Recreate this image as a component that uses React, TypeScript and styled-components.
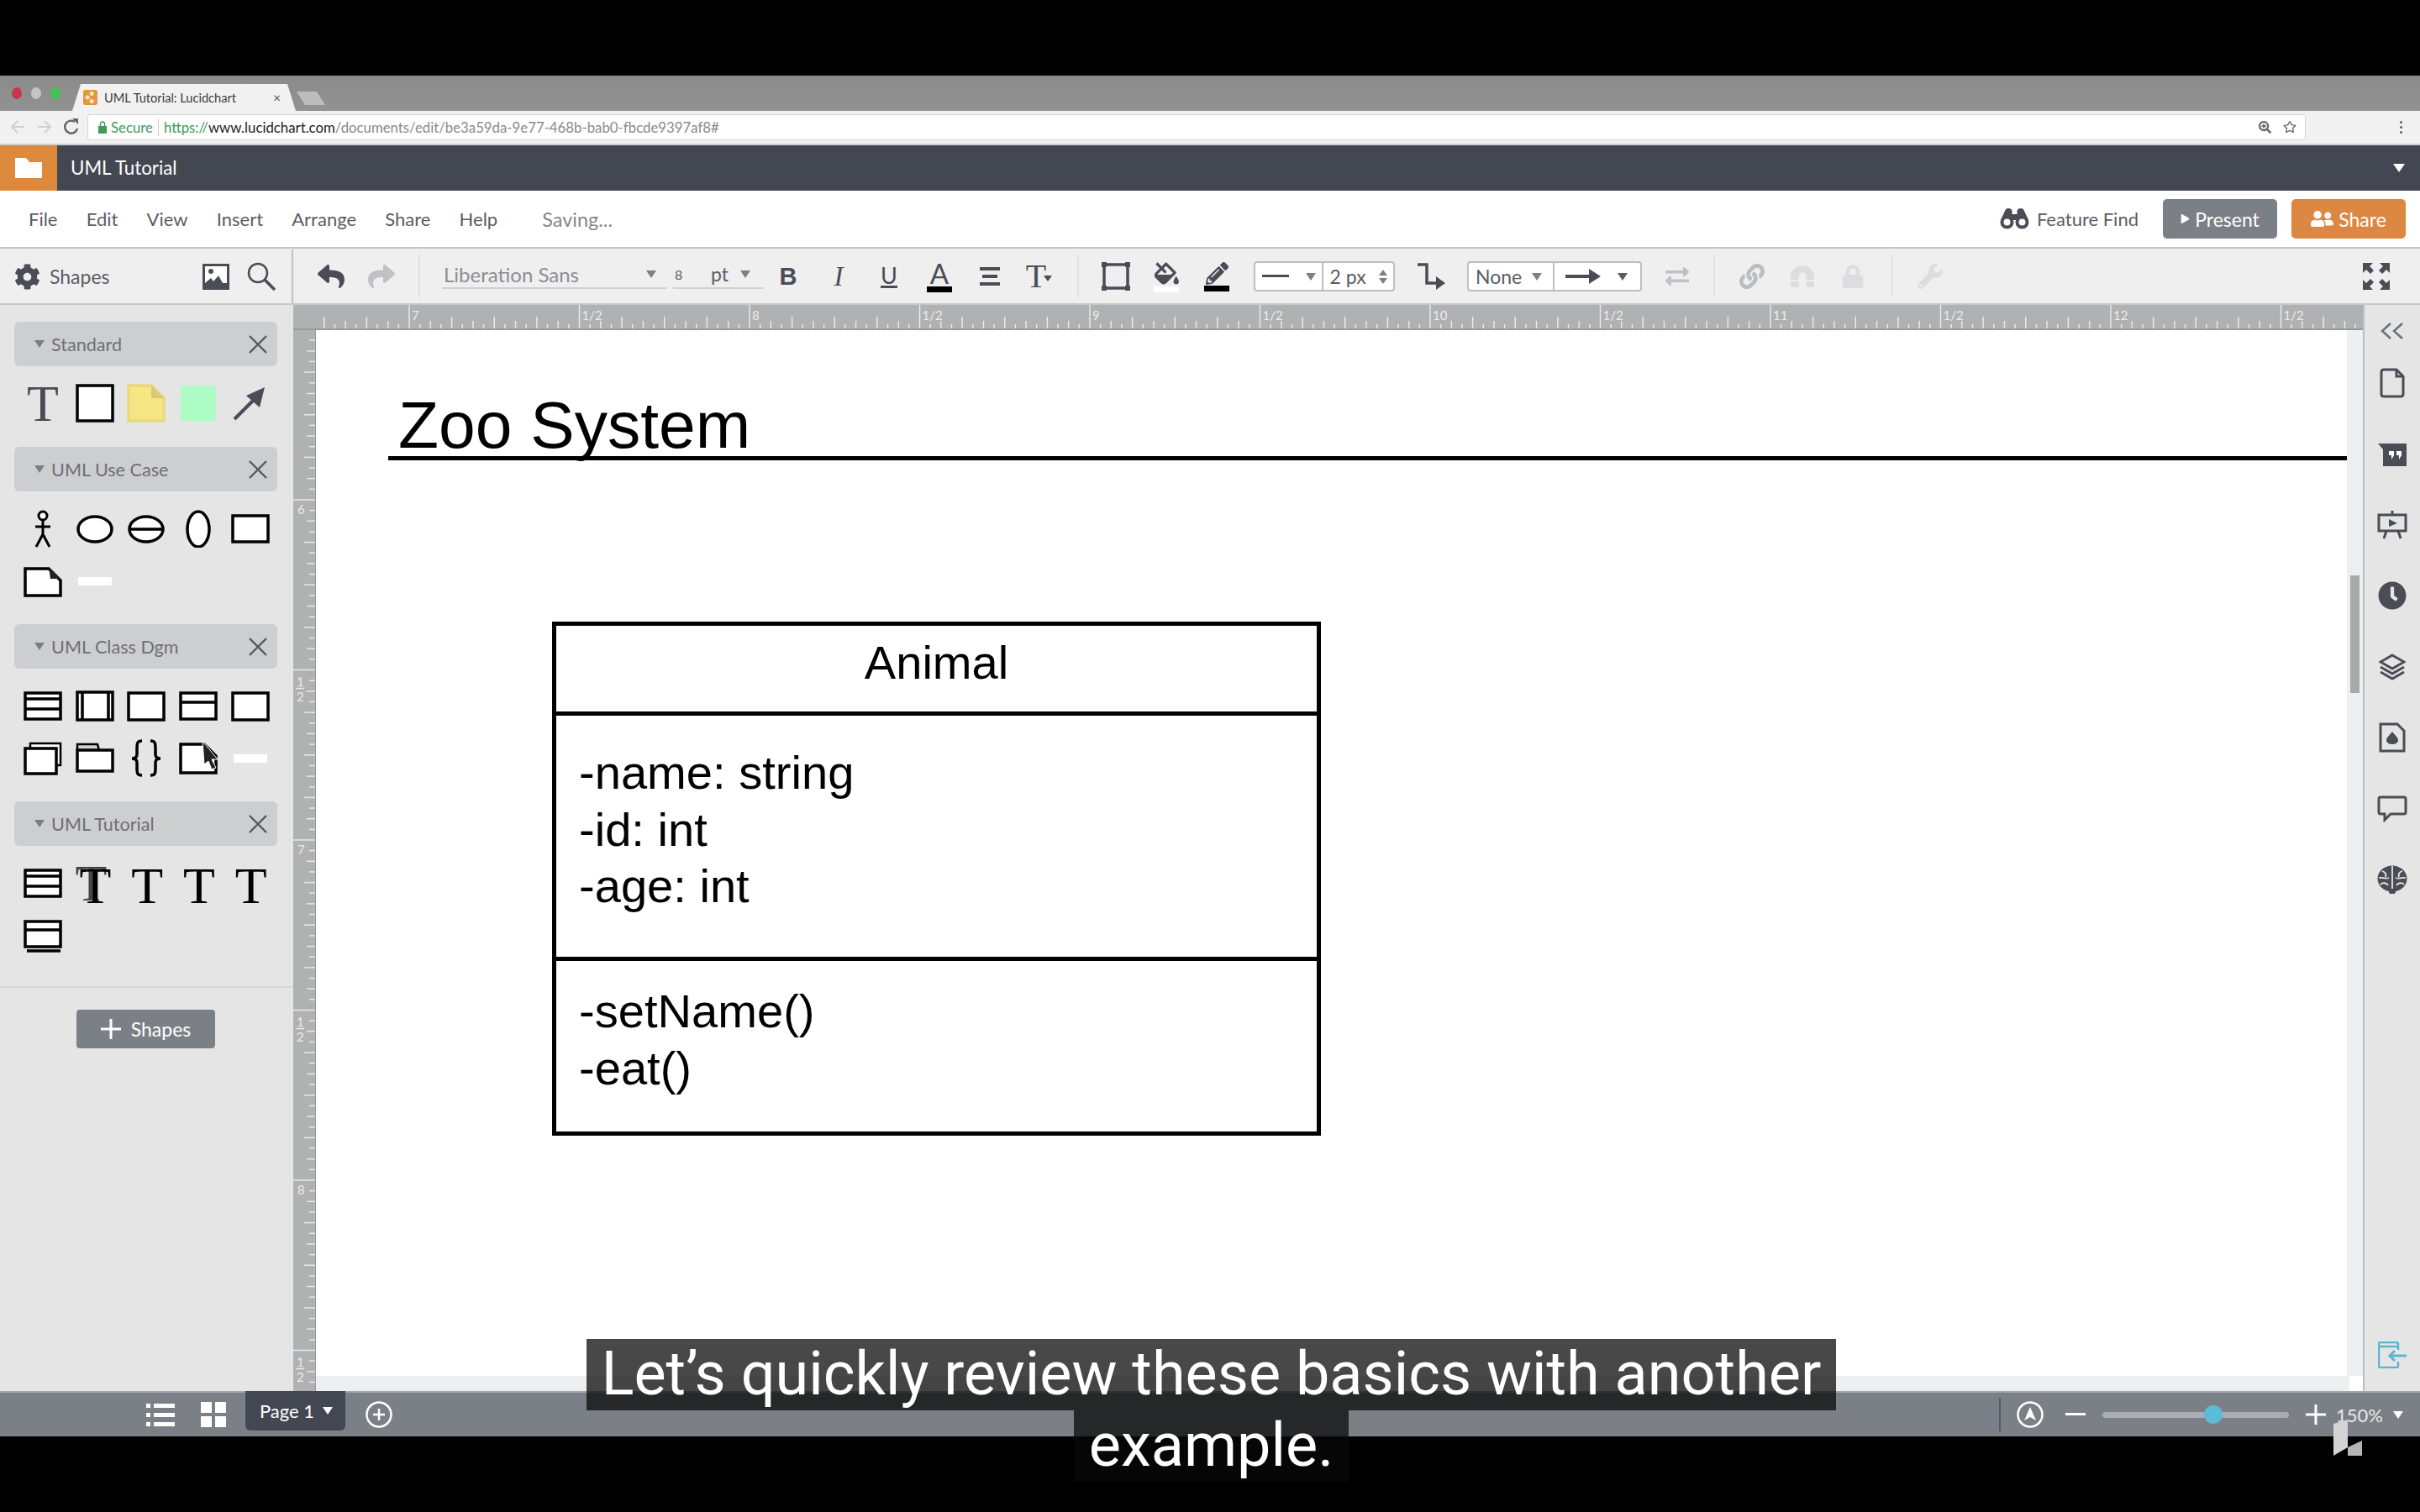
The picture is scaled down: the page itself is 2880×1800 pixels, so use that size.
import React from 'react'
import styled, { createGlobalStyle } from 'styled-components'
import {
  FaClock,
  FaCog,
  FaExchangeAlt,
  FaFillDrip,
  FaLink,
  FaLock,
  FaMagnet,
  FaPencilAlt,
  FaPlay,
  FaRegStar,
  FaReply,
  FaSearchPlus,
  FaShare,
  FaUserFriends,
  FaWrench
} from 'react-icons/fa'

const UI_FONT = `Lato, 'Noto Sans', sans-serif`
const DOC_FONT = `'Liberation Sans', Arial, sans-serif`
const SERIF_FONT = `'Liberation Serif', serif`
const ICON = '#4a4d55'

const GlobalStyle = createGlobalStyle`
  html, body {
    margin: 0;
    padding: 0;
    background: #000;
  }
  * {
    box-sizing: border-box;
  }
`

const STYLED_ROOT = styled.div`
  position: relative;
  display: flex;
  flex-direction: column;
  width: 2880px;
  height: 1800px;
  overflow: hidden;
  background: #000;
  font-family: ${UI_FONT};
`

const STYLED_LETTERBOX = styled.div`
  flex: 0 0 90px;
  background: #000;
`

const STYLED_SPACE = styled.span<{ $left?: number; $width?: number }>`
  display: flex;
  flex: none;
  width: ${({ $width }) => ($width ? `${$width}px` : 'auto')};
  margin-left: ${({ $left }) => $left ?? 0}px;
`

/* browser chrome */
const STYLED_TAB_STRIP = styled.div`
  flex: 0 0 42px;
  display: flex;
  align-items: flex-end;
  background: linear-gradient(#8b8b8b, #929292);
`

const STYLED_LIGHTS = styled.div`
  display: flex;
  align-items: center;
  align-self: flex-start;
  gap: 11px;
  height: 42px;
  padding: 0 14px;
`

const STYLED_LIGHT = styled.span<{ $color: string }>`
  width: 12px;
  height: 14px;
  border-radius: 50%;
  background: ${({ $color }) => $color};
`

const STYLED_TAB = styled.div`
  display: flex;
  align-items: center;
  width: 266px;
  height: 32px;
  padding: 0 18px 0 13px;
  background: #f1f1f1;
  clip-path: polygon(0 100%, 10px 0, 256px 0, 100% 100%);
  font-size: 14.6px;
  color: #3c3c3c;
`

const STYLED_FAVICON = styled.span`
  flex: 0 0 17px;
  height: 18px;
  border-radius: 2px;
  background: radial-gradient(circle at 60% 25%, #f7e2ba 0 2px, transparent 3px),
    radial-gradient(circle at 60% 75%, #f7e2ba 0 2px, transparent 3px),
    radial-gradient(circle at 30% 50%, #f7e2ba 0 2px, transparent 3px), #e3983f;
`

const STYLED_TAB_TITLE = styled.span`
  flex: 1;
  margin-left: 8px;
  white-space: nowrap;
`

const STYLED_TAB_X = styled.span`
  font-size: 15px;
  color: #555;
`

const STYLED_GHOST_TAB = styled.div`
  width: 34px;
  height: 16px;
  margin: 0 0 7px 1px;
  background: #bdbdbd;
  clip-path: polygon(0 0, 24px 0, 100% 100%, 10px 100%);
`

const STYLED_URL_ROW = styled.div`
  flex: 0 0 41px;
  display: flex;
  align-items: center;
  padding-bottom: 1px;
  background: #f1f1f1;
  border-bottom: 2px solid #cfcfcf;
`

const STYLED_NAV = styled.div`
  display: flex;
  align-items: center;
  width: 104px;
  padding-left: 12px;
  gap: 14px;
`

const STYLED_ADDRESS = styled.div`
  display: flex;
  align-items: center;
  width: 2640px;
  height: 31px;
  padding: 0 10px 0 12px;
  background: #fff;
  border: 1px solid #d4d4d4;
  border-radius: 3px;
  font-size: 16.8px;
  white-space: nowrap;
`

const STYLED_SECURE = styled.span`
  margin-left: 5px;
  padding-right: 6px;
  border-right: 1px solid #d0d0d0;
  color: #3f9b58;
`

const STYLED_URL_PART = styled.span<{ $color: string }>`
  color: ${({ $color }) => $color};
`

const STYLED_ADDRESS_ICONS = styled.div`
  display: flex;
  align-items: center;
  gap: 14px;
  margin-left: auto;
  color: #666;
`

const STYLED_KEBAB = styled.div`
  margin-left: 112px;
  display: flex;
  flex-direction: column;
  gap: 3px;
  span {
    width: 3px;
    height: 3px;
    background: #5c5c5c;
    border-radius: 50%;
  }
`

/* lucidchart header */
const STYLED_TITLE_BAR = styled.div`
  flex: 0 0 54px;
  display: flex;
  align-items: center;
  background: #434751;
  color: #fff;
`

const STYLED_FOLDER_BOX = styled.div`
  display: flex;
  align-items: center;
  justify-content: center;
  width: 68px;
  height: 100%;
  background: #dd8a3c;
`

const STYLED_DOC_TITLE = styled.div`
  margin: -2px 0 0 16px;
  font-size: 22.3px;
  font-weight: 400;
`

const STYLED_CARET = styled.span<{ $size?: number; $color?: string }>`
  display: inline-block;
  flex: none;
  width: 0;
  height: 0;
  border-left: ${({ $size }) => $size ?? 6}px solid transparent;
  border-right: ${({ $size }) => $size ?? 6}px solid transparent;
  border-top: ${({ $size }) => ($size ?? 6) * 1.5}px solid ${({ $color }) => $color ?? '#7d7f84'};
`

const STYLED_TITLE_CARET = styled.div`
  margin-left: auto;
  margin-right: 18px;
  display: flex;
`

const STYLED_MENU_BAR = styled.div`
  flex: 0 0 69px;
  display: flex;
  align-items: center;
  padding: 0 17px 0 34px;
  background: #fff;
  border-bottom: 2px solid #c4c5c7;
  font-size: 22px;
  color: #5a5d64;
`

const STYLED_MENU_ITEMS = styled.div`
  display: flex;
  gap: 34.2px;
`

const STYLED_SAVING = styled.span`
  margin-left: 53px;
  font-size: 23.5px;
  color: #85878c;
`

const STYLED_FEATURE = styled.div`
  display: flex;
  align-items: center;
  gap: 9px;
  margin: 0 29px 0 auto;
  color: #5a5d64;
`

const STYLED_ACTION = styled.div<{ $bg: string; $gap?: number }>`
  display: flex;
  align-items: center;
  justify-content: center;
  gap: 6px;
  width: 136px;
  height: 47px;
  margin-left: ${({ $gap }) => $gap ?? 0}px;
  border-radius: 5px;
  background: ${({ $bg }) => $bg};
  font-size: 23px;
  color: #fff;
`

/* toolbar */
const STYLED_TOOLBAR = styled.div`
  flex: 0 0 67px;
  display: flex;
  align-items: center;
  padding-top: 1px;
  background: #efeff0;
  border-bottom: 2px solid #c6c7c9;
`

const STYLED_TOOL_SHAPES = styled.div`
  display: flex;
  align-items: center;
  width: 349px;
  height: 100%;
  padding: 0 19px 0 17px;
  border-right: 2px solid #bfc0c2;
  font-size: 23px;
  color: #5a5d64;
  svg {
    color: ${ICON};
  }
`

const STYLED_TOOL_LABEL = styled.span`
  margin-left: 11px;
  flex: 1;
`

const STYLED_TOOL_STRIP = styled.div`
  flex: 1;
  display: flex;
  align-items: center;
  height: 100%;
  padding-left: 15px;
`

const STYLED_TOOL = styled.div<{ $fade?: number; $gap?: number }>`
  position: relative;
  display: flex;
  flex: 0 0 60px;
  flex-direction: column;
  align-items: center;
  justify-content: center;
  height: 100%;
  margin-left: ${({ $gap }) => $gap ?? 0}px;
  color: ${ICON};
  font-size: 27px;
  opacity: ${({ $fade }) => $fade ?? 1};
`

const STYLED_TOOL_SEP = styled.div<{ $left: number; $right?: number }>`
  flex: 0 0 2px;
  height: 50px;
  margin: 0 ${({ $right }) => $right ?? 14}px 0 ${({ $left }) => $left}px;
  background: #e0e0e1;
`

const STYLED_SELECT = styled.div<{ $width: number; $gap?: number }>`
  display: flex;
  align-items: center;
  width: ${({ $width }) => $width}px;
  height: 34px;
  margin-left: ${({ $gap }) => $gap ?? 0}px;
  border-bottom: 2px solid #cfd0d2;
  font-size: 23px;
  color: #8c8e93;
  transform: translateY(-2px);
`

const STYLED_SELECT_TEXT = styled.span<{ $small?: boolean }>`
  flex: 1;
  padding-left: 2px;
  font-size: ${({ $small }) => ($small ? 16 : 24)}px;
  color: ${({ $small }) => ($small ? '#5a5d64' : '#8c8e93')};
`

const STYLED_PT = styled.span`
  margin: 0 14px 0 24px;
  font-size: 23px;
  color: #5a5d64;
`

const STYLED_BOX_GROUP = styled.div<{ $width: number; $gap: number }>`
  display: flex;
  align-items: center;
  width: ${({ $width }) => $width}px;
  height: 36px;
  margin-left: ${({ $gap }) => $gap}px;
  background: #fff;
  border: 2px solid #bdbec1;
  border-radius: 4px;
  font-size: 23px;
  color: #5a5d64;
`

const STYLED_BOX_PART = styled.div<{ $width: number; $last?: boolean; $left?: number; $right?: number }>`
  display: flex;
  align-items: center;
  justify-content: space-between;
  width: ${({ $width }) => $width}px;
  height: 100%;
  padding: 0 ${({ $right }) => $right ?? 7}px 0 ${({ $left }) => $left ?? 8}px;
  border-right: ${({ $last }) => ($last ? 'none' : '2px solid #bdbec1')};
`

const STYLED_SPIN = styled.div`
  display: flex;
  flex-direction: column;
  gap: 3px;
  span:first-child {
    transform: rotate(180deg);
  }
`

const STYLED_BOLD = styled.span`
  font-family: ${DOC_FONT};
  font-weight: 700;
  font-size: 29px;
`

const STYLED_ITALIC = styled.span`
  font-family: ${SERIF_FONT};
  font-style: italic;
  font-size: 33px;
`

const STYLED_UNDER = styled.span`
  font-family: ${UI_FONT};
  font-size: 27px;
  line-height: 25px;
  border-bottom: 3px solid ${ICON};
`

const STYLED_COLOR_A = styled.span`
  font-family: ${UI_FONT};
  font-size: 33px;
  line-height: 30px;
`

const STYLED_SWATCH = styled.span<{ $color: string }>`
  display: block;
  width: 30px;
  height: 7px;
  margin-top: 1px;
  background: ${({ $color }) => $color};
`

const STYLED_TOOL_T = styled.span`
  margin-left: -10px;
  font-family: ${SERIF_FONT};
  font-size: 40px;
  line-height: 1;
`

const STYLED_T_CARET = styled.span`
  position: absolute;
  left: 34px;
  top: 31px;
  display: flex;
`

const STYLED_MAGNET = styled(FaMagnet)`
  transform: rotate(180deg);
`

const STYLED_FULLSCREEN = styled.div`
  margin: 0 22px 0 auto;
  width: 60px;
  display: flex;
  justify-content: center;
`

/* workspace */
const STYLED_WORKSPACE = styled.div`
  flex: 1;
  display: flex;
  min-height: 0;
`

const STYLED_SIDEBAR = styled.div`
  flex: 0 0 349px;
  padding-top: 20px;
  background: #e5e5e6;
`

const STYLED_SHAPE_HEAD = styled.div`
  display: flex;
  align-items: center;
  width: 313px;
  height: 53px;
  margin-left: 17px;
  padding: 0 12px 0 24px;
  border-radius: 6px;
  background: #cdced0;
  font-size: 21.6px;
  color: #6d7076;
`

const STYLED_HEAD_LABEL = styled.span`
  margin-left: 8px;
  flex: 1;
`

const STYLED_SHAPE_GRID = styled.div`
  display: grid;
  grid-template-columns: repeat(5, 61.7px);
  grid-auto-rows: 62px;
  padding: 13px 0 21px 20px;
`

const STYLED_CELL = styled.div`
  display: flex;
  align-items: center;
  justify-content: center;
`

const STYLED_SHAPE_SVG = styled.svg`
  width: 46px;
  height: 46px;
  fill: #fff;
  stroke: #000;
  stroke-width: 3.5;
`

const STYLED_GLYPH_CELL = styled.span<{ $dark?: boolean }>`
  margin: ${({ $dark }) => ($dark ? '5px 0 0 2px' : '0')};
  font-family: ${SERIF_FONT};
  font-size: 62px;
  line-height: 1;
  color: ${({ $dark }) => ($dark ? '#000' : ICON)};
`

const STYLED_DOUBLE_T = styled.span`
  margin: 5px 0 0 2px;
  font-family: ${SERIF_FONT};
  font-size: 62px;
  line-height: 1;
  color: #000;
  text-shadow: -5px -3px 0 #444;
`

const STYLED_SIDE_FOOT = styled.div`
  margin-top: 9px;
  padding-top: 26px;
  border-top: 2px solid #d6d7d8;
  display: flex;
  justify-content: center;
`

const STYLED_ADD_SHAPES = styled.div`
  display: flex;
  align-items: center;
  justify-content: center;
  gap: 12px;
  width: 165px;
  height: 46px;
  margin-left: -2px;
  border-radius: 4px;
  background: #7b8087;
  font-size: 23px;
  color: #fff;
`

const STYLED_MAIN = styled.div`
  flex: 1;
  display: flex;
  flex-direction: column;
  min-width: 0;
`

const STYLED_RULER_SVG = styled.svg`
  display: block;
  flex: none;
  background: #b0b1b3;
  font-family: ${UI_FONT};
  font-size: 15px;
`

const STYLED_CANVAS_ROW = styled.div`
  flex: 1;
  display: flex;
  min-height: 0;
`

const STYLED_CANVAS_COL = styled.div`
  flex: 1;
  display: flex;
  flex-direction: column;
  min-width: 0;
`

const STYLED_PAGE = styled.div`
  position: relative;
  flex: 1;
  display: flex;
  min-height: 0;
  background: #fff;
  font-family: ${DOC_FONT};
  color: #000;
`

const STYLED_PAGE_AREA = styled.div`
  position: relative;
  flex: 1;
`

const STYLED_SCROLL_TRACK = styled.div`
  position: relative;
  flex: 0 0 19px;
  background: #eeeff0;
`

const STYLED_SCROLL_THUMB = styled.div`
  position: absolute;
  top: 292px;
  left: 4px;
  width: 11px;
  height: 140px;
  background: #a9a9a9;
`

const STYLED_HSCROLL = styled.div`
  flex: 0 0 18px;
  display: flex;
  justify-content: flex-end;
  background: #eeeff0;
`

const STYLED_CORNER = styled.div`
  width: 16px;
  background: #fff;
`

const STYLED_DOC_TITLE_TEXT = styled.div`
  position: absolute;
  left: 98px;
  top: 74px;
  font-size: 78.6px;
  line-height: 1;
  white-space: nowrap;
`

const STYLED_DOC_RULE = styled.div`
  position: absolute;
  left: 86px;
  right: 0;
  top: 150px;
  height: 5px;
  background: #000;
`

const STYLED_CLASS_BOX = styled.div`
  position: absolute;
  left: 281px;
  top: 347px;
  display: flex;
  flex-direction: column;
  width: 915px;
  height: 612px;
  border: 5px solid #000;
  font-size: 56.1px;
  line-height: 67.5px;
`

const STYLED_CLASS_NAME = styled.div`
  flex: 0 0 107px;
  padding-top: 10px;
  text-align: center;
  border-bottom: 5px solid #000;
`

const STYLED_CLASS_ATTRS = styled.div`
  flex: 0 0 292px;
  padding: 34px 0 0 27px;
  border-bottom: 5px solid #000;
`

const STYLED_CLASS_METHODS = styled.div`
  flex: 1;
  padding: 26px 0 0 27px;
`

const STYLED_RAIL = styled.div`
  flex: 0 0 68px;
  display: flex;
  flex-direction: column;
  align-items: center;
  padding: 10px 0 27px;
  background: #e5e5e6;
  border-left: 2px solid #bcbdbf;
  color: ${ICON};
`

const STYLED_RAIL_CELL = styled.div<{ $height?: number }>`
  display: flex;
  align-items: center;
  justify-content: center;
  flex: 0 0 ${({ $height }) => $height ?? 84.4}px;
  font-size: 34px;
`

const STYLED_RAIL_EXIT = styled.div`
  margin-top: auto;
  display: flex;
`

/* status bar */
const STYLED_STATUS = styled.div`
  flex: 0 0 54px;
  display: flex;
  align-items: center;
  padding-left: 174px;
  background: #7b8087;
  border-top: 2px solid #a2a5a9;
  color: #fff;
`

const STYLED_PAGE_TAB = styled.div`
  display: flex;
  align-items: center;
  gap: 10px;
  align-self: flex-start;
  width: 119px;
  height: 47px;
  margin: -2px 24px 0 23px;
  padding-left: 17px;
  border-radius: 0 0 6px 6px;
  background: #434751;
  font-size: 22px;
`

const STYLED_STATUS_RIGHT = styled.div`
  display: flex;
  align-items: center;
  margin-left: auto;
  padding-right: 20px;
  font-size: 22px;
  color: #e8e9ea;
`

const STYLED_STATUS_SEP = styled.div`
  width: 2px;
  height: 40px;
  margin-right: 19px;
  background: #565a62;
`

const STYLED_SLIDER = styled.div`
  position: relative;
  width: 222px;
  height: 7px;
  margin: 0 20px;
  border-radius: 4px;
  background: #a9adb3;
`

const STYLED_SLIDER_KNOB = styled.div`
  position: absolute;
  top: -8px;
  width: 22px;
  height: 22px;
  border-radius: 50%;
  background: #5bbcd6;
`

const STYLED_ZOOM_VALUE = styled.span`
  margin: 0 12px;
`

/* overlays */
const STYLED_CAPTIONS = styled.div`
  position: absolute;
  left: 3px;
  right: 0;
  top: 1594px;
  display: flex;
  flex-direction: column;
  align-items: center;
`

const STYLED_CAPTION = styled.div`
  height: 85px;
  padding: 0 18px;
  background: rgba(8, 8, 8, 0.74);
  color: #fff;
  font-family: Roboto, sans-serif;
  font-size: 72px;
  line-height: 84px;
  white-space: nowrap;
`

const STYLED_WATERMARK = styled.svg`
  position: absolute;
  left: 2777px;
  top: 1690px;
  width: 34px;
  height: 44px;
`

type ShapeKind =
  | 'rect' | 'note' | 'green' | 'arrow' | 'actor' | 'ellipse' | 'split' | 'tall' | 'wide' | 'fold' | 'dash'
  | 'classThree' | 'classSides' | 'classHead' | 'plain' | 'stack' | 'folder' | 'braces' | 'foldCursor' | 'classFoot'

const drawings: Record<ShapeKind, React.ReactNode> = {
  rect: <rect x="2" y="2" width="42" height="42" />,
  note: (
    <>
      <path d="M2 2H29L44 17V44H2Z" fill="#f6e784" stroke="#ead87e" />
      <path d="M29 2V17H44Z" fill="#d8c878" stroke="none" />
    </>
  ),
  green: <rect x="2" y="2" width="42" height="42" fill="#adfcc3" stroke="none" />,
  arrow: (
    <>
      <line x1="4" y1="42" x2="30" y2="16" stroke={ICON} strokeWidth="4" />
      <polygon points="40,4 34,28 18,14" fill={ICON} stroke="none" />
    </>
  ),
  actor: (
    <g strokeWidth="3">
      <circle cx="23" cy="8" r="5" />
      <path d="M23 13V31M14 21H32M23 30L15 45M23 30L31 45" fill="none" />
    </g>
  ),
  ellipse: <ellipse cx="23" cy="24" rx="20" ry="15" />,
  split: (
    <>
      <ellipse cx="23" cy="24" rx="20" ry="15" />
      <line x1="3" y1="24" x2="43" y2="24" />
    </>
  ),
  tall: <ellipse cx="23" cy="24" rx="13" ry="21" />,
  wide: <rect x="2" y="8" width="42" height="31" />,
  fold: (
    <>
      <path d="M2 9H30L44 23V41H2Z" />
      <path d="M30 7L32 21H44Z" fill="#222" stroke="none" />
    </>
  ),
  dash: <rect x="3" y="19" width="40" height="10" stroke="none" />,
  plain: <rect x="2" y="8" width="42" height="32" />,
  classThree: (
    <>
      <rect x="2" y="8" width="42" height="31" />
      <path d="M2 15H44M2 27H44" fill="none" />
    </>
  ),
  classSides: (
    <>
      <rect x="2" y="7" width="42" height="33" />
      <path d="M8 7V40M39 7V40" fill="none" />
    </>
  ),
  classHead: (
    <>
      <rect x="2" y="8" width="42" height="31" />
      <line x1="2" y1="19" x2="44" y2="19" />
    </>
  ),
  classFoot: (
    <>
      <rect x="2" y="7" width="42" height="30" />
      <line x1="2" y1="17" x2="44" y2="17" />
      <line x1="4" y1="42" x2="44" y2="42" />
    </>
  ),
  stack: (
    <>
      <rect x="8" y="6" width="36" height="26" strokeWidth="2.5" />
      <rect x="2" y="12" width="37" height="30" />
    </>
  ),
  folder: (
    <>
      <path d="M2 14V7H26L28 14" fill="#cfcfcf" strokeWidth="2.5" />
      <rect x="2" y="14" width="42" height="25" />
    </>
  ),
  braces: (
    <path
      d="M18 3C12 3 12 6 12 13V19C12 22 10 24 6 24C10 24 12 26 12 29V35C12 41 12 44 18 44M28 3C34 3 34 6 34 13V19C34 22 36 24 40 24C36 24 34 26 34 29V35C34 41 34 44 28 44"
      fill="none"
    />
  ),
  foldCursor: (
    <>
      <path d="M2 7H30L44 21V41H2Z" />
      <path d="M28 3L46 25L39 25L44 35L39 37L35 27L30 31Z" fill="#222" stroke="#fff" strokeWidth="1" />
    </>
  )
}

const Shape = ({ kind }: { kind: ShapeKind }) => (
  <STYLED_CELL>
    <STYLED_SHAPE_SVG viewBox="0 0 46 46">{drawings[kind]}</STYLED_SHAPE_SVG>
  </STYLED_CELL>
)

const SerifT = ({ dark }: { dark?: boolean }) => (
  <STYLED_CELL>
    <STYLED_GLYPH_CELL $dark={dark}>T</STYLED_GLYPH_CELL>
  </STYLED_CELL>
)

const CloseX = () => (
  <svg width="22" height="22" viewBox="0 0 22 22" stroke="#55585f" strokeWidth="2.4">
    <path d="M1 1L21 21M21 1L1 21" />
  </svg>
)

const Binoculars = () => (
  <svg width="35" height="25" viewBox="0 0 35 25" fill={ICON}>
    <circle cx="8.5" cy="16.5" r="6" fill="none" stroke={ICON} strokeWidth="4" />
    <circle cx="26.5" cy="16.5" r="6" fill="none" stroke={ICON} strokeWidth="4" />
    <path d="M1 14L6 3Q7 0 10 0Q14 0 14.5 3V12H3Z" />
    <path d="M34 14L29 3Q28 0 25 0Q21 0 20.5 3V12H32Z" />
    <rect x="13" y="7" width="9" height="7" />
  </svg>
)

const Brain = () => (
  <svg width="36" height="34" viewBox="0 0 36 34">
    <ellipse cx="18" cy="16" rx="17.5" ry="15.5" fill={ICON} />
    <rect x="14" y="28" width="8" height="6" rx="2" fill={ICON} />
    <path
      d="M18 1V28M6 7C10 8 11 11 10 14M2 15C6 14 9 17 14 15M4 23C7 20 11 21 13 24M30 7C26 8 25 11 26 14M34 15C30 14 27 17 22 15M32 23C29 20 25 21 23 24"
      fill="none"
      stroke="#e5e5e6"
      strokeWidth="1.8"
    />
  </svg>
)

const Layers = () => (
  <svg width="32" height="32" viewBox="0 0 32 32" fill="none" stroke={ICON} strokeWidth="3">
    <path d="M16 2L30 10L16 18L2 10Z" />
    <path d="M2 16L16 24L30 16" />
    <path d="M2 22L16 30L30 22" />
  </svg>
)

const ShapeSection = ({ title, children }: { title: string; children: React.ReactNode }) => (
  <>
    <STYLED_SHAPE_HEAD>
      <STYLED_CARET $size={6} $color="#7b7e84" />
      <STYLED_HEAD_LABEL>{title}</STYLED_HEAD_LABEL>
      <CloseX />
    </STYLED_SHAPE_HEAD>
    <STYLED_SHAPE_GRID>{children}</STYLED_SHAPE_GRID>
  </>
)

const Sidebar = () => (
  <STYLED_SIDEBAR>
    <ShapeSection title="Standard">
      <SerifT />
      <Shape kind="rect" />
      <Shape kind="note" />
      <Shape kind="green" />
      <Shape kind="arrow" />
    </ShapeSection>
    <ShapeSection title="UML Use Case">
      <Shape kind="actor" />
      <Shape kind="ellipse" />
      <Shape kind="split" />
      <Shape kind="tall" />
      <Shape kind="wide" />
      <Shape kind="fold" />
      <Shape kind="dash" />
    </ShapeSection>
    <ShapeSection title="UML Class Dgm">
      <Shape kind="classThree" />
      <Shape kind="classSides" />
      <Shape kind="plain" />
      <Shape kind="classHead" />
      <Shape kind="plain" />
      <Shape kind="stack" />
      <Shape kind="folder" />
      <Shape kind="braces" />
      <Shape kind="foldCursor" />
      <Shape kind="dash" />
    </ShapeSection>
    <ShapeSection title="UML Tutorial">
      <Shape kind="classThree" />
      <STYLED_CELL>
        <STYLED_DOUBLE_T>T</STYLED_DOUBLE_T>
      </STYLED_CELL>
      <SerifT dark />
      <SerifT dark />
      <SerifT dark />
      <Shape kind="classFoot" />
    </ShapeSection>
    <STYLED_SIDE_FOOT>
      <STYLED_ADD_SHAPES>
        <svg width="24" height="24" viewBox="0 0 24 24" stroke="#fff" strokeWidth="3">
          <path d="M12 0V24M0 12H24" />
        </svg>
        Shapes
      </STYLED_ADD_SHAPES>
    </STYLED_SIDE_FOOT>
  </STYLED_SIDEBAR>
)

const HALF_INCH = 202.5
const TICK = HALF_INCH / 16
const H_LABELS = ['7', '1/2', '8', '1/2', '9', '1/2', '10', '1/2', '11', '1/2', '12', '1/2']
const V_LABELS = ['6', '1/2', '7', '1/2', '8', '1/2']

const tickLength = (k: number) => {
  if (k % 16 === 0) return 28
  if (k % 4 === 0) return 14
  if (k % 2 === 0) return 9
  return 5
}

const HRuler = () => {
  const origin = 138
  const ticks = []
  for (let k = -8; origin + k * TICK < 2463; k++) ticks.push(k)
  return (
    <STYLED_RULER_SVG width="2463" height="30">
      {ticks.map((k) => {
        const x = origin + k * TICK
        return <line key={k} x1={x} x2={x} y1={28} y2={28 - tickLength(k)} stroke="#e9e9ea" strokeWidth="1.5" />
      })}
      {H_LABELS.map((label, i) => (
        <text key={i} x={origin + i * HALF_INCH + 3} y="18" fill="#ececed" stroke="none">
          {label}
        </text>
      ))}
      <line x1="0" x2="2463" y1="29" y2="29" stroke="#98999b" strokeWidth="2" />
    </STYLED_RULER_SVG>
  )
}

const VRuler = () => {
  const origin = 202
  const ticks = []
  for (let k = -15; origin + k * TICK < 1263; k++) ticks.push(k)
  return (
    <STYLED_RULER_SVG width="27" height="100%">
      {ticks.map((k) => {
        const y = origin + k * TICK
        const len = k % 16 === 0 ? 27 : k % 4 === 0 ? 13 : k % 2 === 0 ? 10 : 7
        return <line key={k} x1={26} x2={26 - len} y1={y} y2={y} stroke="#e9e9ea" strokeWidth="1.5" />
      })}
      {V_LABELS.map((label, i) => {
        const y = origin + i * HALF_INCH
        if (label === '1/2') {
          return (
            <g key={i} fill="#ececed">
              <text x="4" y={y + 19}>1</text>
              <line x1="3" x2="13" y1={y + 22} y2={y + 22} stroke="#ececed" strokeWidth="1.5" />
              <text x="4" y={y + 37}>2</text>
            </g>
          )
        }
        return (
          <text key={i} x="5" y={y + 17} fill="#ececed">
            {label}
          </text>
        )
      })}
      <line x1="26.5" x2="26.5" y1="0" y2="1263" stroke="#98999b" strokeWidth="1" />
    </STYLED_RULER_SVG>
  )
}

const Canvas = () => (
  <STYLED_PAGE>
    <STYLED_PAGE_AREA>
      <STYLED_DOC_TITLE_TEXT>Zoo System</STYLED_DOC_TITLE_TEXT>
      <STYLED_DOC_RULE />
      <STYLED_CLASS_BOX>
        <STYLED_CLASS_NAME>Animal</STYLED_CLASS_NAME>
        <STYLED_CLASS_ATTRS>
          <div>-name: string</div>
          <div>-id: int</div>
          <div>-age: int</div>
        </STYLED_CLASS_ATTRS>
        <STYLED_CLASS_METHODS>
          <div>-setName()</div>
          <div>-eat()</div>
        </STYLED_CLASS_METHODS>
      </STYLED_CLASS_BOX>
    </STYLED_PAGE_AREA>
    <STYLED_SCROLL_TRACK>
      <STYLED_SCROLL_THUMB />
    </STYLED_SCROLL_TRACK>
  </STYLED_PAGE>
)

const Rail = () => (
  <STYLED_RAIL>
    <STYLED_RAIL_CELL $height={41}>
      <svg width="28" height="20" viewBox="0 0 28 20" fill="none" stroke="#6d7076" strokeWidth="2.5">
        <path d="M12 1L2 10L12 19M26 1L16 10L26 19" />
      </svg>
    </STYLED_RAIL_CELL>
    <STYLED_RAIL_CELL>
      <svg width="30" height="36" viewBox="0 0 30 36" fill="none" stroke={ICON} strokeWidth="3">
        <path d="M5 2H20L28 10V31Q28 34 25 34H5Q2 34 2 31V5Q2 2 5 2Z" />
        <path d="M20 2V10H28" />
      </svg>
    </STYLED_RAIL_CELL>
    <STYLED_RAIL_CELL>
      <svg width="34" height="28" viewBox="0 0 34 28">
        <path d="M0 1H34V28H6V8Z" fill={ICON} />
        <path d="M13 10H19V15L16 20V15H13ZM22 10H28V15L25 20V15H22Z" fill="#fff" />
      </svg>
    </STYLED_RAIL_CELL>
    <STYLED_RAIL_CELL>
      <svg width="36" height="36" viewBox="0 0 36 36" fill="none" stroke={ICON} strokeWidth="3">
        <path d="M2 6H34V25H2Z" />
        <path d="M18 1V6M11 25L8 34M25 25L28 34" />
        <path d="M14 11L24 16L14 20Z" fill={ICON} stroke="none" />
      </svg>
    </STYLED_RAIL_CELL>
    <STYLED_RAIL_CELL>
      <FaClock />
    </STYLED_RAIL_CELL>
    <STYLED_RAIL_CELL>
      <Layers />
    </STYLED_RAIL_CELL>
    <STYLED_RAIL_CELL>
      <svg width="32" height="36" viewBox="0 0 32 36" fill="none" stroke={ICON} strokeWidth="3">
        <path d="M2 2H22L30 10V34H2Z" />
        <path d="M16 11C19 15 23 18 23 21C23 25 19 26 16 26C13 26 9 25 9 21C9 18 13 15 16 11Z" fill={ICON} stroke="none" />
      </svg>
    </STYLED_RAIL_CELL>
    <STYLED_RAIL_CELL>
      <svg width="36" height="32" viewBox="0 0 36 32" fill="none" stroke={ICON} strokeWidth="3">
        <path d="M4 2H32Q34 2 34 4V20Q34 22 32 22H16L9 29V22H4Q2 22 2 20V4Q2 2 4 2Z" />
      </svg>
    </STYLED_RAIL_CELL>
    <STYLED_RAIL_CELL>
      <Brain />
    </STYLED_RAIL_CELL>
    <STYLED_RAIL_EXIT>
      <svg width="34" height="32" viewBox="0 0 34 32" fill="none" stroke="#5bb7cf" strokeWidth="2.5">
        <path d="M24 10V3Q24 1 22 1H3Q1 1 1 3V29Q1 31 3 31H22Q24 31 24 29V24M1 6H24" />
        <path d="M34 17H14M20 11L14 17L20 23" strokeWidth="3" />
      </svg>
    </STYLED_RAIL_EXIT>
  </STYLED_RAIL>
)

const Toolbar = () => (
  <STYLED_TOOLBAR>
    <STYLED_TOOL_SHAPES>
      <FaCog size={31} />
      <STYLED_TOOL_LABEL>Shapes</STYLED_TOOL_LABEL>
      <svg width="32" height="31" viewBox="0 0 32 31">
        <path d="M0 0H32V31H0Z" fill={ICON} />
        <path d="M3 3H29V23H24L19 14L13 21L10 17L3 23Z" fill="#fff" />
        <circle cx="10" cy="9" r="3" fill={ICON} />
      </svg>
      <STYLED_SPACE $left={21}>
        <svg width="34" height="34" viewBox="0 0 34 34" fill="none" stroke={ICON} strokeWidth="2.5">
          <circle cx="13" cy="13" r="11" />
          <path d="M21 21L33 33" strokeWidth="3.5" />
        </svg>
      </STYLED_SPACE>
    </STYLED_TOOL_SHAPES>
    <STYLED_TOOL_STRIP>
      <STYLED_TOOL>
        <FaReply size={32} />
      </STYLED_TOOL>
      <STYLED_TOOL $fade={0.28}>
        <FaShare size={32} />
      </STYLED_TOOL>
      <STYLED_TOOL_SEP $left={14} $right={26} />
      <STYLED_SELECT $width={267}>
        <STYLED_SELECT_TEXT>Liberation Sans</STYLED_SELECT_TEXT>
        <STYLED_CARET $size={6} />
        <STYLED_SPACE $width={12} />
      </STYLED_SELECT>
      <STYLED_SELECT $width={107} $gap={8}>
        <STYLED_SELECT_TEXT $small>8</STYLED_SELECT_TEXT>
        <STYLED_PT>pt</STYLED_PT>
        <STYLED_CARET $size={6} />
        <STYLED_SPACE $width={15} />
      </STYLED_SELECT>
      <STYLED_TOOL>
        <STYLED_BOLD>B</STYLED_BOLD>
      </STYLED_TOOL>
      <STYLED_TOOL>
        <STYLED_ITALIC>I</STYLED_ITALIC>
      </STYLED_TOOL>
      <STYLED_TOOL>
        <STYLED_UNDER>U</STYLED_UNDER>
      </STYLED_TOOL>
      <STYLED_TOOL>
        <STYLED_COLOR_A>A</STYLED_COLOR_A>
        <STYLED_SWATCH $color="#000" />
      </STYLED_TOOL>
      <STYLED_TOOL>
        <svg width="28" height="24" viewBox="0 0 28 24" fill={ICON}>
          <path d="M2 1H26V5H2ZM5 10H23V14H5ZM2 19H26V23H2Z" />
        </svg>
      </STYLED_TOOL>
      <STYLED_TOOL>
        <STYLED_TOOL_T>T</STYLED_TOOL_T>
        <STYLED_T_CARET>
          <STYLED_CARET $size={5} $color={ICON} />
        </STYLED_T_CARET>
      </STYLED_TOOL>
      <STYLED_TOOL_SEP $left={14} />
      <STYLED_TOOL>
        <svg width="36" height="36" viewBox="0 0 36 36" fill="none" stroke={ICON} strokeWidth="3.5">
          <path d="M4 4H32V32H4Z" />
          <path d="M1 1H7V7H1ZM29 1H35V7H29ZM1 29H7V35H1ZM29 29H35V35H29Z" fill={ICON} strokeWidth="0" />
        </svg>
      </STYLED_TOOL>
      <STYLED_TOOL>
        <FaFillDrip size={29} />
        <STYLED_SWATCH $color="#fff" />
      </STYLED_TOOL>
      <STYLED_TOOL>
        <FaPencilAlt size={27} />
        <STYLED_SWATCH $color="#000" />
      </STYLED_TOOL>
      <STYLED_BOX_GROUP $width={168} $gap={14}>
        <STYLED_BOX_PART $width={81}>
          <svg width="32" height="4">
            <rect width="32" height="3" fill={ICON} />
          </svg>
          <STYLED_CARET $size={6} />
        </STYLED_BOX_PART>
        <STYLED_BOX_PART $width={84} $last>
          2 px
          <STYLED_SPIN>
            <STYLED_CARET $size={5} />
            <STYLED_CARET $size={5} />
          </STYLED_SPIN>
        </STYLED_BOX_PART>
      </STYLED_BOX_GROUP>
      <STYLED_TOOL $gap={13}>
        <svg width="34" height="34" viewBox="0 0 34 34" fill="none" stroke={ICON} strokeWidth="3.5">
          <path d="M1 3H12V25H24" />
          <path d="M23 17L34 25L23 33Z" fill={ICON} stroke="none" />
        </svg>
      </STYLED_TOOL>
      <STYLED_BOX_GROUP $width={208} $gap={13}>
        <STYLED_BOX_PART $width={103} $right={13}>
          None
          <STYLED_CARET $size={6} />
        </STYLED_BOX_PART>
        <STYLED_BOX_PART $width={103} $left={13} $right={15} $last>
          <svg width="42" height="18" viewBox="0 0 42 18" fill={ICON}>
            <path d="M0 7H28V0L42 9L28 18V11H0Z" />
          </svg>
          <STYLED_CARET $size={6} $color="#5a5d64" />
        </STYLED_BOX_PART>
      </STYLED_BOX_GROUP>
      <STYLED_TOOL $gap={12} $fade={0.28}>
        <FaExchangeAlt size={28} />
      </STYLED_TOOL>
      <STYLED_TOOL_SEP $left={13} />
      <STYLED_TOOL $fade={0.3}>
        <FaLink size={30} />
      </STYLED_TOOL>
      <STYLED_TOOL $fade={0.1}>
        <STYLED_MAGNET size={28} />
      </STYLED_TOOL>
      <STYLED_TOOL $fade={0.1}>
        <FaLock size={28} />
      </STYLED_TOOL>
      <STYLED_TOOL_SEP $left={16} />
      <STYLED_TOOL $fade={0.1}>
        <FaWrench size={30} />
      </STYLED_TOOL>
      <STYLED_FULLSCREEN>
        <svg width="32" height="32" viewBox="0 0 32 32" fill={ICON}>
          <path d="M0 0H12L8 4L13 9L9 13L4 8L0 12ZM32 0H20L24 4L19 9L23 13L28 8L32 12ZM0 32H12L8 28L13 23L9 19L4 24L0 20ZM32 32H20L24 28L19 23L23 19L28 24L32 20Z" />
        </svg>
      </STYLED_FULLSCREEN>
    </STYLED_TOOL_STRIP>
  </STYLED_TOOLBAR>
)

const ZOOM_KNOB_PERCENT = (121 / 222) * 100

export default function App() {
  return (
    <STYLED_ROOT>
      <GlobalStyle />
      <STYLED_LETTERBOX />
      <STYLED_TAB_STRIP>
        <STYLED_LIGHTS>
          <STYLED_LIGHT $color="#c9354f" />
          <STYLED_LIGHT $color="#c4c4c4" />
          <STYLED_LIGHT $color="#45c255" />
        </STYLED_LIGHTS>
        <STYLED_TAB>
          <STYLED_FAVICON />
          <STYLED_TAB_TITLE>UML Tutorial: Lucidchart</STYLED_TAB_TITLE>
          <STYLED_TAB_X>×</STYLED_TAB_X>
        </STYLED_TAB>
        <STYLED_GHOST_TAB />
      </STYLED_TAB_STRIP>
      <STYLED_URL_ROW>
        <STYLED_NAV>
          <svg width="18" height="18" viewBox="0 0 18 18" fill="none" stroke="#d0d0d0" strokeWidth="2">
            <path d="M17 9H2M9 2L2 9L9 16" />
          </svg>
          <svg width="18" height="18" viewBox="0 0 18 18" fill="none" stroke="#d0d0d0" strokeWidth="2">
            <path d="M1 9H16M9 2L16 9L9 16" />
          </svg>
          <svg width="18" height="20" viewBox="0 0 18 20" fill="none" stroke="#666" strokeWidth="2.5">
            <path d="M16 12A7.5 7.5 0 1 1 13 4" />
            <path d="M10 0H17V7Z" fill="#666" stroke="none" />
          </svg>
        </STYLED_NAV>
        <STYLED_ADDRESS>
          <svg width="10" height="15" viewBox="0 0 10 15" fill="#3f9b58">
            <path d="M0 6H10V15H0Z" />
            <path d="M2.5 6V3.5A2.5 2.5 0 0 1 7.5 3.5V6" fill="none" stroke="#3f9b58" strokeWidth="1.5" />
          </svg>
          <STYLED_SECURE>Secure</STYLED_SECURE>
          <STYLED_SPACE $width={6} />
          <STYLED_URL_PART $color="#3f9b58">https://</STYLED_URL_PART>
          <STYLED_URL_PART $color="#222">www.lucidchart.com</STYLED_URL_PART>
          <STYLED_URL_PART $color="#8a8a8a">/documents/edit/be3a59da-9e77-468b-bab0-fbcde9397af8#</STYLED_URL_PART>
          <STYLED_ADDRESS_ICONS>
            <FaSearchPlus size={15} />
            <FaRegStar size={16} />
          </STYLED_ADDRESS_ICONS>
        </STYLED_ADDRESS>
        <STYLED_KEBAB>
          <span />
          <span />
          <span />
        </STYLED_KEBAB>
      </STYLED_URL_ROW>
      <STYLED_TITLE_BAR>
        <STYLED_FOLDER_BOX>
          <svg width="32" height="24" viewBox="0 0 32 24" fill="#fff">
            <path d="M0 0H13L17 5H32V24H0Z" />
          </svg>
        </STYLED_FOLDER_BOX>
        <STYLED_DOC_TITLE>UML Tutorial</STYLED_DOC_TITLE>
        <STYLED_TITLE_CARET>
          <STYLED_CARET $size={7} $color="#fff" />
        </STYLED_TITLE_CARET>
      </STYLED_TITLE_BAR>
      <STYLED_MENU_BAR>
        <STYLED_MENU_ITEMS>
          {['File', 'Edit', 'View', 'Insert', 'Arrange', 'Share', 'Help'].map((item) => (
            <span key={item}>{item}</span>
          ))}
        </STYLED_MENU_ITEMS>
        <STYLED_SAVING>Saving...</STYLED_SAVING>
        <STYLED_FEATURE>
          <Binoculars />
          Feature Find
        </STYLED_FEATURE>
        <STYLED_ACTION $bg="#7b8087">
          <FaPlay size={11} />
          Present
        </STYLED_ACTION>
        <STYLED_ACTION $bg="#dd8842" $gap={17}>
          <FaUserFriends size={27} />
          Share
        </STYLED_ACTION>
      </STYLED_MENU_BAR>
      <Toolbar />
      <STYLED_WORKSPACE>
        <Sidebar />
        <STYLED_MAIN>
          <HRuler />
          <STYLED_CANVAS_ROW>
            <VRuler />
            <STYLED_CANVAS_COL>
              <Canvas />
              <STYLED_HSCROLL>
                <STYLED_CORNER />
              </STYLED_HSCROLL>
            </STYLED_CANVAS_COL>
          </STYLED_CANVAS_ROW>
        </STYLED_MAIN>
        <Rail />
      </STYLED_WORKSPACE>
      <STYLED_STATUS>
        <svg width="34" height="30" viewBox="0 0 34 30" fill="#fff">
          <path d="M0 2H5V7H0ZM9 2H34V7H9ZM0 13H5V18H0ZM9 13H34V18H9ZM0 24H5V29H0ZM9 24H34V29H9Z" />
        </svg>
        <STYLED_SPACE $left={31}>
          <svg width="30" height="30" viewBox="0 0 30 30" fill="#fff">
            <path d="M0 0H13V13H0ZM17 0H30V13H17ZM0 17H13V30H0ZM17 17H30V30H17Z" />
          </svg>
        </STYLED_SPACE>
        <STYLED_PAGE_TAB>
          Page 1
          <STYLED_CARET $size={6} $color="#fff" />
        </STYLED_PAGE_TAB>
        <svg width="32" height="32" viewBox="0 0 32 32" fill="none" stroke="#fff" strokeWidth="2.5">
          <circle cx="16" cy="16" r="14.5" />
          <path d="M16 9V23M9 16H23" />
        </svg>
        <STYLED_STATUS_RIGHT>
          <STYLED_STATUS_SEP />
          <svg width="32" height="32" viewBox="0 0 32 32" fill="none" stroke="#fff" strokeWidth="2.5">
            <circle cx="16" cy="16" r="14.5" />
            <path d="M16 7L23 23L16 19L9 23Z" fill="#fff" stroke="none" />
          </svg>
          <STYLED_SPACE $left={26}>
            <svg width="24" height="4" viewBox="0 0 24 4" fill="#fff">
              <rect width="24" height="3" />
            </svg>
          </STYLED_SPACE>
          <STYLED_SLIDER>
            <STYLED_SLIDER_KNOB style={{ left: `${ZOOM_KNOB_PERCENT}%` }} />
          </STYLED_SLIDER>
          <svg width="24" height="24" viewBox="0 0 24 24" stroke="#fff" strokeWidth="3">
            <path d="M12 0V24M0 12H24" />
          </svg>
          <STYLED_ZOOM_VALUE>150%</STYLED_ZOOM_VALUE>
          <STYLED_CARET $size={6} $color="#fff" />
        </STYLED_STATUS_RIGHT>
      </STYLED_STATUS>
      <STYLED_LETTERBOX />
      <STYLED_CAPTIONS>
        <STYLED_CAPTION>Let’s quickly review these basics with another</STYLED_CAPTION>
        <STYLED_CAPTION>example.</STYLED_CAPTION>
      </STYLED_CAPTIONS>
      <STYLED_WATERMARK viewBox="0 0 34 44">
        <polygon points="0,5 17,0 17,33 0,43" fill="#d4d4d4" />
        <polygon points="17,33 34,25 34,43 17,43" fill="#b5b5b5" />
      </STYLED_WATERMARK>
    </STYLED_ROOT>
  )
}
